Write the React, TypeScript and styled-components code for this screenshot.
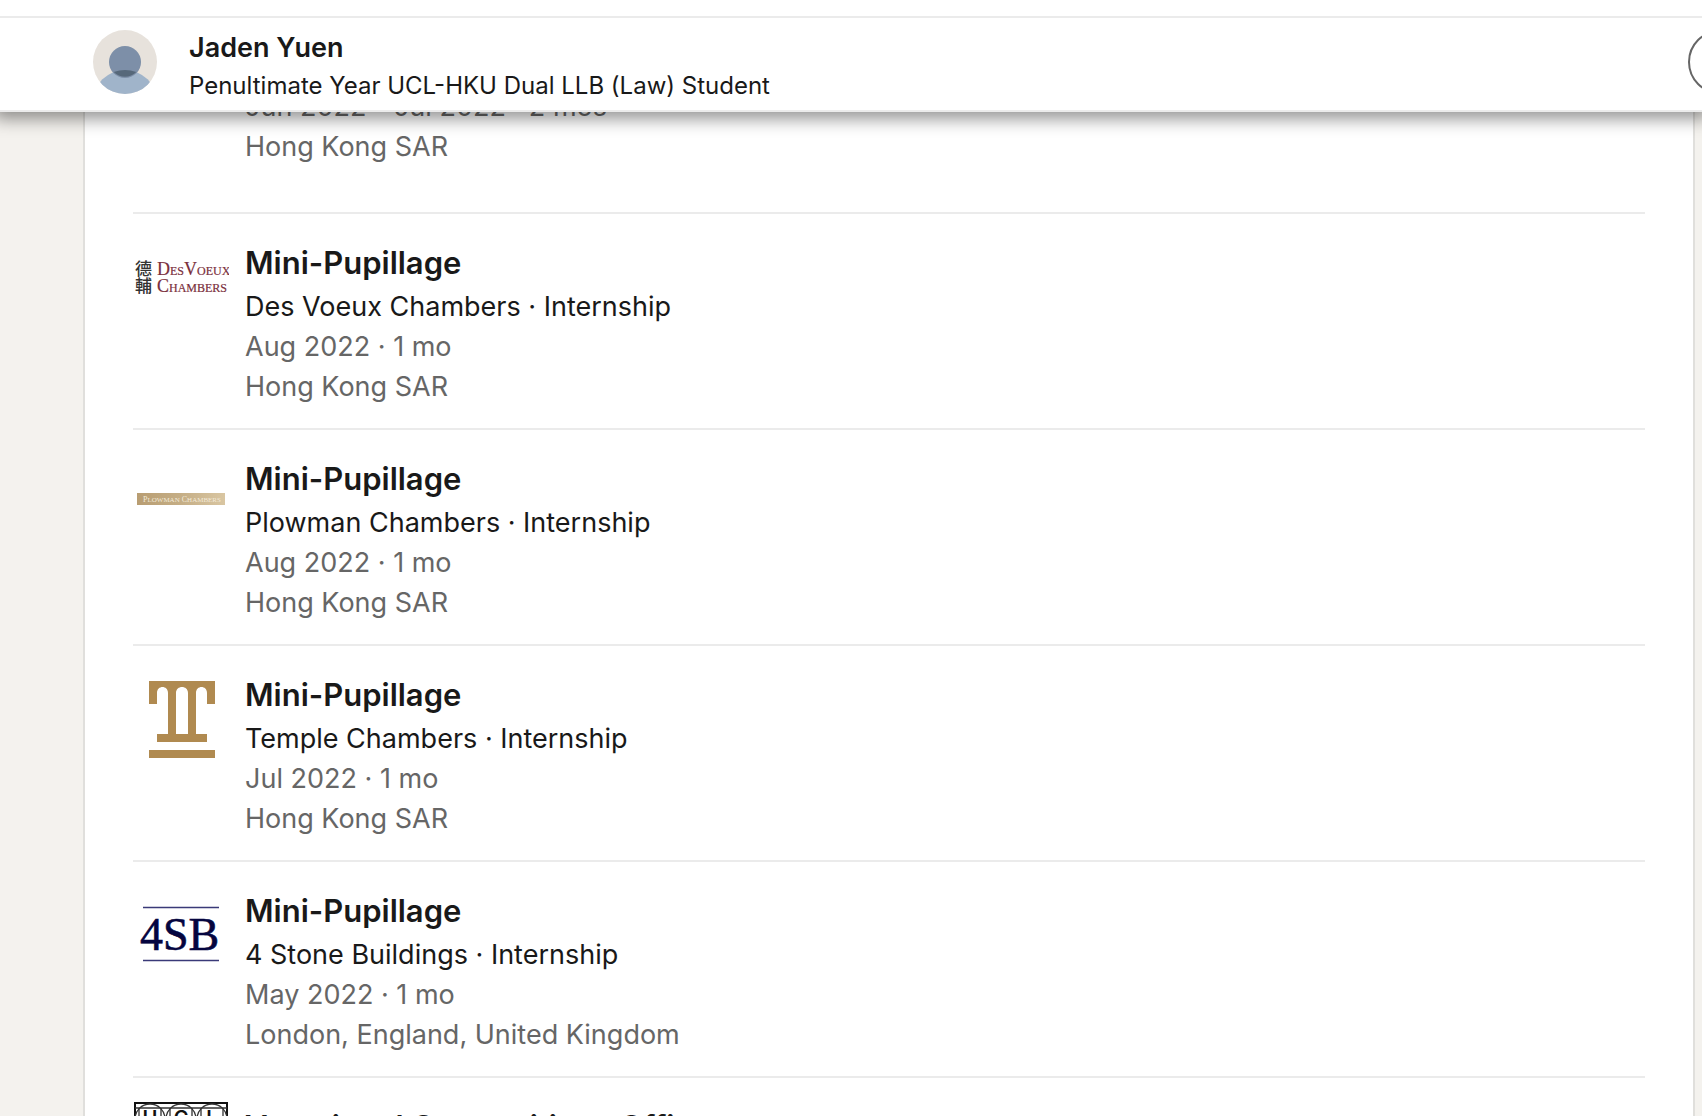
import React from "react";
import styled, { createGlobalStyle } from "styled-components";

const GlobalStyle = createGlobalStyle`
  * { box-sizing: border-box; }
  body {
    margin: 0;
    background: #f4f2ee;
    color: #191919;
    font-family: Inter, "Liberation Sans", "Noto Sans CJK TC", sans-serif;
  }
`;

const Page = styled.div`
  height: 100vh;
  overflow: hidden;
`;

const Header = styled.header`
  position: relative;
  z-index: 1;
  background: #fff;
  padding-top: 16px;
  box-shadow: 0 1px 16px 6px rgba(0, 0, 0, 0.42);
`;

const ProfileBar = styled.div`
  display: flex;
  align-items: center;
  height: 96px;
  padding: 0 0 4px 93px;
  border-top: 2px solid #ebebeb;
  border-bottom: 2px solid #ebebeb;
`;

const Avatar = styled.svg`
  flex: none;
  width: 64px;
  height: 64px;
  border-radius: 50%;
`;

const Identity = styled.div`
  flex: 1;
  min-width: 0;
  margin-left: 32px;
  padding-top: 8px;
  white-space: nowrap;
`;

const Name = styled.h1`
  margin: 0;
  font-size: 27px;
  font-weight: 600;
  line-height: 40px;
`;

const Headline = styled.p`
  margin: 0;
  font-size: 24px;
  line-height: 36px;
`;

const MoreButton = styled.button`
  flex: none;
  width: 120px;
  height: 64px;
  margin-right: -106px;
  border: 2px solid #666;
  border-radius: 32px;
  background: #fff;
`;

const Card = styled.main`
  margin: -26px 7px 0 83px;
  padding: 0 48px;
  border: solid #e0dfdc;
  border-width: 0 2px;
  background: #fff;
`;

const Entries = styled.ul`
  margin: 0;
  padding: 0;
  list-style: none;
`;

const Entry = styled.li<{ $continued?: boolean }>`
  display: flex;
  gap: 16px;
  padding: ${(p) => (p.$continued ? "0 0 45px" : "24px 0 21px")};
  border-bottom: 2px solid #ebebeb;
`;

const LogoBox = styled.div`
  flex: none;
  width: 96px;
`;

const Logo = styled.svg`
  display: block;
  width: 96px;
  height: 96px;
`;

const Details = styled.div`
  padding-top: 1px;
`;

const Role = styled.h2`
  margin: 0;
  font-size: 31px;
  font-weight: 600;
  line-height: 48px;
`;

const Line = styled.p<{ $muted?: boolean }>`
  margin: 0;
  font-size: 27px;
  line-height: 40px;
  color: ${(p) => (p.$muted ? "#666" : "#191919")};
`;

const serif = '"Liberation Serif", serif';

const DesVoeuxLogo = () => (
  <Logo viewBox="0 0 96 96" role="img" aria-label="Des Voeux Chambers">
    <g fontFamily='"Noto Sans CJK TC", sans-serif' fontSize="17" fontWeight="500" fill="#333">
      <text x="2" y="37">德</text>
      <text x="2" y="54">輔</text>
    </g>
    <g fontFamily={serif} fill="#7a2f3c" stroke="#7a2f3c" strokeWidth="0.2">
      <text x="24" y="37" fontSize="18">D<tspan fontSize="12">ES</tspan>V<tspan fontSize="12">OEUX</tspan></text>
      <text x="24" y="54" fontSize="18">C<tspan fontSize="12">HAMBERS</tspan></text>
    </g>
  </Logo>
);

const PlowmanLogo = () => (
  <Logo viewBox="0 0 96 96" role="img" aria-label="Plowman Chambers">
    <defs>
      <linearGradient id="plowman" x1="0" x2="1">
        <stop offset="0" stopColor="#b89d72" />
        <stop offset="0.5" stopColor="#c5ae86" />
        <stop offset="1" stopColor="#d9c6a2" />
      </linearGradient>
    </defs>
    <rect x="4" y="39" width="88" height="12" fill="url(#plowman)" />
    <text x="10" y="48" fontFamily={serif} fontSize="8" fill="#f3ead8">
      P<tspan fontSize="7">LOWMAN</tspan> C<tspan fontSize="7">HAMBERS</tspan>
    </text>
  </Logo>
);

const TempleLogo = () => (
  <Logo viewBox="0 0 96 96" role="img" aria-label="Temple Chambers">
    <g fill="#b08a50">
      <path d="M16 11H82V34H74V23C74 15 63 15 63 23V64H74V72H24V64H35V23C35 15 24 15 24 23V34H16ZM43 23V64H55V23C55 15 43 15 43 23Z" fillRule="evenodd" />
      <rect x="16" y="80" width="66" height="8" />
    </g>
  </Logo>
);

const FourStoneLogo = () => (
  <Logo viewBox="0 0 96 96" role="img" aria-label="4 Stone Buildings">
    <path d="M10 21.5H86M10 74.5H86" stroke="#3a3a78" strokeWidth="1.6" />
    <text x="7" y="64" fontFamily={serif} fontSize="46" fill="#05053f" stroke="#05053f" strokeWidth="0.6">4SB</text>
  </Logo>
);

const LettersLogo = () => (
  <Logo viewBox="0 0 96 96" role="img" aria-label="HCL">
    <rect x="2" y="1" width="92" height="94" fill="#fff" stroke="#111" strokeWidth="2" />
    <g fill="none" stroke="#333" strokeWidth="1.3">
      <circle cx="17" cy="17" r="15" />
      <circle cx="48" cy="17" r="15" />
      <circle cx="79" cy="17" r="15" />
      <path d="M2 6H94M6 6V30M28 6V30M37 6V30M59 6V30M68 6V30M90 6V30" />
    </g>
    <g fontFamily="Inter, sans-serif" fontSize="20" fontWeight="600" fill="#111" textAnchor="middle">
      <text x="17" y="23">H</text>
      <text x="48" y="23">C</text>
      <text x="79" y="23">L</text>
    </g>
  </Logo>
);

type Job = {
  role: string;
  company: string;
  dates: string;
  place: string;
  Mark: () => React.ReactElement;
};

const jobs: Job[] = [
  { role: "Mini-Pupillage", company: "Des Voeux Chambers · Internship", dates: "Aug 2022 · 1 mo", place: "Hong Kong SAR", Mark: DesVoeuxLogo },
  { role: "Mini-Pupillage", company: "Plowman Chambers · Internship", dates: "Aug 2022 · 1 mo", place: "Hong Kong SAR", Mark: PlowmanLogo },
  { role: "Mini-Pupillage", company: "Temple Chambers · Internship", dates: "Jul 2022 · 1 mo", place: "Hong Kong SAR", Mark: TempleLogo },
  { role: "Mini-Pupillage", company: "4 Stone Buildings · Internship", dates: "May 2022 · 1 mo", place: "London, England, United Kingdom", Mark: FourStoneLogo },
];

export default function App() {
  return (
    <Page>
      <GlobalStyle />
      <Header>
        <ProfileBar>
          <Avatar viewBox="0 0 64 64" role="img" aria-label="Jaden Yuen">
            <rect width="64" height="64" fill="#e7e2dc" />
            <circle cx="32" cy="72" r="32" fill="#a0b4ca" />
            <circle cx="32" cy="32" r="16" fill="#7d8fa8" />
            <path d="M20.7 42.1A32 32 0 0 1 43.3 42.1A16 16 0 0 1 20.7 42.1Z" fill="#56687a" />
          </Avatar>
          <Identity>
            <Name>Jaden Yuen</Name>
            <Headline>Penultimate Year UCL-HKU Dual LLB (Law) Student</Headline>
          </Identity>
          <MoreButton type="button" aria-label="More" />
        </ProfileBar>
      </Header>
      <Card>
        <Entries>
          <Entry $continued>
            <LogoBox />
            <Details>
              <Line $muted>Jun 2022 - Jul 2022 · 2 mos</Line>
              <Line $muted>Hong Kong SAR</Line>
            </Details>
          </Entry>
          {jobs.map(({ role, company, dates, place, Mark }) => (
            <Entry key={company}>
              <LogoBox><Mark /></LogoBox>
              <Details>
                <Role>{role}</Role>
                <Line>{company}</Line>
                <Line $muted>{dates}</Line>
                <Line $muted>{place}</Line>
              </Details>
            </Entry>
          ))}
          <Entry>
            <LogoBox><LettersLogo /></LogoBox>
            <Details>
              <Role>Vocational Competitions Officer</Role>
            </Details>
          </Entry>
        </Entries>
      </Card>
    </Page>
  );
}
